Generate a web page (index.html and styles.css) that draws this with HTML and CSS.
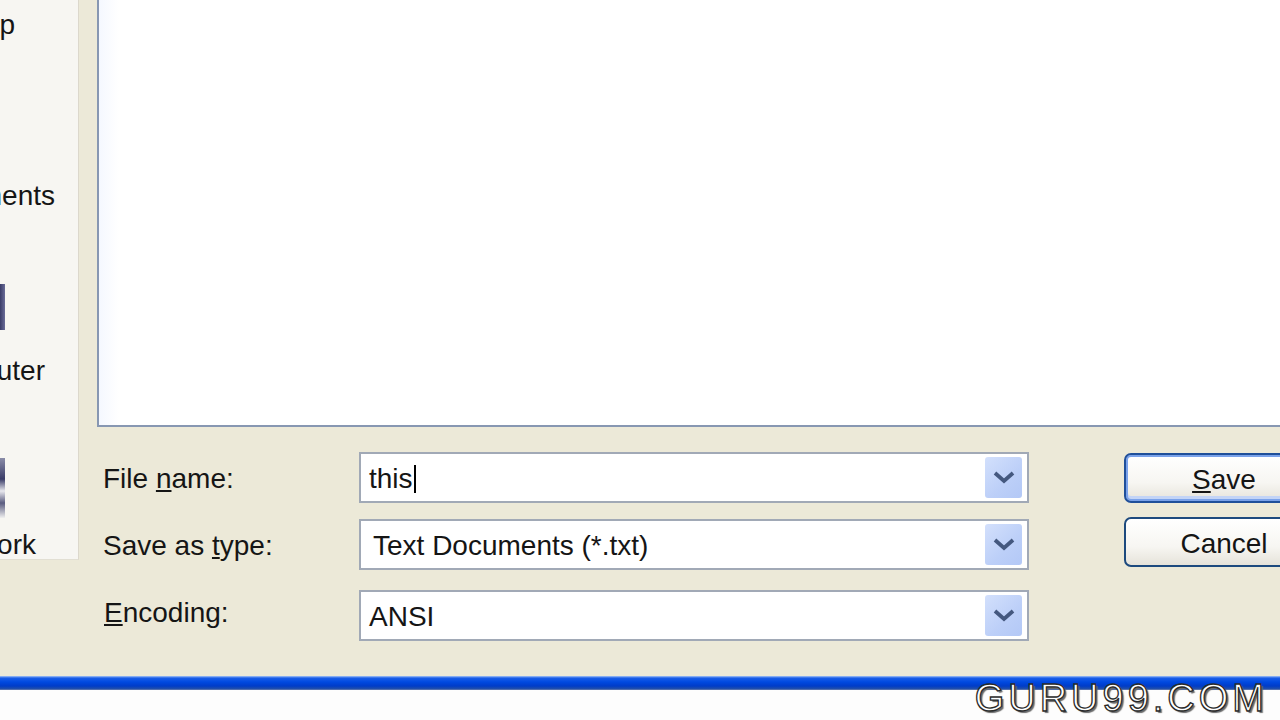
FILE: index.html
```html
<!DOCTYPE html>
<html>
<head>
<meta charset="utf-8">
<link rel="stylesheet" href="styles.css">
</head>
<body>
<div class="screen">
  <div class="dialog">
    <div class="places">
      <div class="place first"><span class="plabel">Desktop</span></div>
      <div class="place docs"><div class="picon"></div><span class="plabel pad-docs">My Documents</span></div>
      <div class="place comp"><div class="picon comp"></div><span class="plabel pad-comp">My Computer</span></div>
      <div class="place net"><div class="picon net"></div><span class="plabel pad-net">My Network</span></div>
    </div>
    <div class="main">
      <div class="filelist"></div>
      <div class="form">
        <label class="lbl r1"><span>File <u>n</u>ame:</span></label>
        <div class="combo r1 edit"><span class="val">this</span><span class="caret"></span><span class="drop"><svg width="22" height="13" viewBox="0 0 22 13"><path d="M2 2 L11 10 L20 2" fill="none" stroke="#44587f" stroke-width="3.8"/></svg></span></div>
        <label class="lbl r2"><span>Save as <u>t</u>ype:</span></label>
        <div class="combo r2"><span class="val type">Text Documents (*.txt)</span><span class="drop"><svg width="22" height="13" viewBox="0 0 22 13"><path d="M2 2 L11 10 L20 2" fill="none" stroke="#44587f" stroke-width="3.8"/></svg></span></div>
        <label class="lbl r3"><span><u>E</u>ncoding:</span></label>
        <div class="combo r3"><span class="val">ANSI</span><span class="drop"><svg width="22" height="13" viewBox="0 0 22 13"><path d="M2 2 L11 10 L20 2" fill="none" stroke="#44587f" stroke-width="3.8"/></svg></span></div>
        <div class="buttons">
          <button class="btn default"><u>S</u>ave</button>
          <button class="btn">Cancel</button>
        </div>
      </div>
    </div>
  </div>
  <div class="taskbar"></div>
  <div class="bottom"></div>
  <div class="watermark">GURU99.COM</div>
</div>
</body>
</html>
```
FILE: styles.css
```css
* { box-sizing: border-box; }
html, body { margin: 0; padding: 0; }
body {
  width: 1280px;
  height: 720px;
  overflow: hidden;
  font-family: "Liberation Sans", Arial, sans-serif;
  color: #151515;
}
.screen {
  position: relative;
  width: 1280px;
  height: 720px;
  display: flex;
  flex-direction: column;
  background: #fff;
}
.dialog {
  height: 676px;
  background: #ece9d8;
  display: flex;
  gap: 18px;
  align-items: flex-start;
}
.places {
  width: 79px;
  height: 560px;
  background: #f7f6f2;
  border-right: 1px solid #dcd8cc;
  border-bottom: 1px solid #e2dfd3;
  display: flex;
  flex-direction: column;
  padding-top: 8px;
  overflow: hidden;
  flex-shrink: 0;
}
.place {
  display: flex;
  flex-direction: column;
  align-items: flex-end;
  flex-shrink: 0;
  justify-content: flex-end;
}
.place.first { height: 34px; }
.place.docs { height: 171px; }
.place.comp { height: 175px; }
.place.net { height: 174px; }
.plabel {
  font-size: 28px;
  line-height: 34px;
  white-space: nowrap;
  padding-right: 63px;
  display: flex;
  justify-content: flex-end;
}
.pad-docs { padding-right: 23px; }
.pad-comp { padding-right: 33px; }
.pad-net { padding-right: 42px; }
.picon {
  align-self: flex-start;
  width: 5px;
  height: 0;
  margin-bottom: 24px;
}
.picon.comp {
  height: 46px;
  background: linear-gradient(90deg, #3a3c68, #6a6c98);
}
.picon.net {
  height: 60px;
  background: linear-gradient(180deg, #8a8ca8 0%, #3a3c68 35%, #e8e8ee 55%, #5a5c80 75%, #f0f0f0 100%);
  margin-bottom: 10px;
}
.main {
  flex: 1;
  display: flex;
  flex-direction: column;
  min-width: 0;
}
.filelist {
  height: 427px;
  background: linear-gradient(90deg, #f5f8ff 0px, #ffffff 20px);
  border-left: 2px solid #8797b2;
  border-bottom: 2px solid #8797b2;
}
.form {
  display: grid;
  grid-template-columns: 256px 670px 95px 200px;
  grid-template-rows: 51px 51px 51px;
  row-gap: 16px;
  padding-left: 6px;
  margin-top: 25px;
}
.lbl {
  font-size: 28px;
  display: flex;
  align-items: center;
  grid-column: 1;
  white-space: pre;
  padding-top: 3px;
}
.r1 { grid-row: 1; }
.r2 { grid-row: 2; }
.r3 { grid-row: 3; margin-top: 4px; }
.lbl.r3 { margin-left: 1px; margin-top: 0; }
.combo {
  grid-column: 2;
  border: 2px solid #a1a9b6;
  background: #fff;
  display: flex;
  align-items: center;
  padding: 3px 5px 3px 8px;
  font-size: 28px;
}
.combo.r3 { height: 51px; }
.val { white-space: nowrap; padding-top: 3px; }
.val.type { padding-left: 4px; }
.caret {
  width: 2px;
  height: 28px;
  background: #000;
  margin-left: 1px;
  margin-top: 3px;
}
.drop {
  margin-left: auto;
  width: 37px;
  height: 100%;
  border-radius: 3px;
  background: linear-gradient(135deg, #d3e0fc 0%, #bccff8 60%, #b3c8f6 100%);
  display: flex;
  align-items: center;
  justify-content: center;
}
.buttons {
  grid-column: 4;
  grid-row: 1 / span 3;
  display: flex;
  flex-direction: column;
  gap: 14px;
  margin-top: 1px;
}
.btn {
  width: 200px;
  height: 50px;
  font-family: "Liberation Sans", Arial, sans-serif;
  font-size: 28px;
  color: #151515;
  border: 2px solid #1d4a7e;
  border-radius: 7px;
  background: linear-gradient(180deg, #ffffff 0%, #f7f6f2 60%, #e6e3da 100%);
  padding: 3px 0 0 0;
  text-align: center;
}
.btn.default {
  border: 2px solid #1f4f9a;
  box-shadow: inset 0 0 0 2px #7aa2ea, inset 0 -3px 0 2px #c3d4f6;
}
.taskbar {
  height: 14px;
  background: linear-gradient(180deg, #a8c6f6 0px, #1a5ee8 2px, #0049e0 6px, #003cc8 10px, #2350a8 13px, #7c8cb8 14px);
}
.bottom {
  flex: 1;
  background: #fdfdfd;
}
.watermark {
  position: absolute;
  right: 12px;
  top: 678px;
  font-family: "Liberation Sans", Arial, sans-serif;
  font-size: 38px;
  letter-spacing: 4px;
  color: #ffffff;
  -webkit-text-stroke: 1.3px #2a2a2a;
  text-shadow: 2px 2px 1px #6a6a6a;
  line-height: 40px;
}
```
